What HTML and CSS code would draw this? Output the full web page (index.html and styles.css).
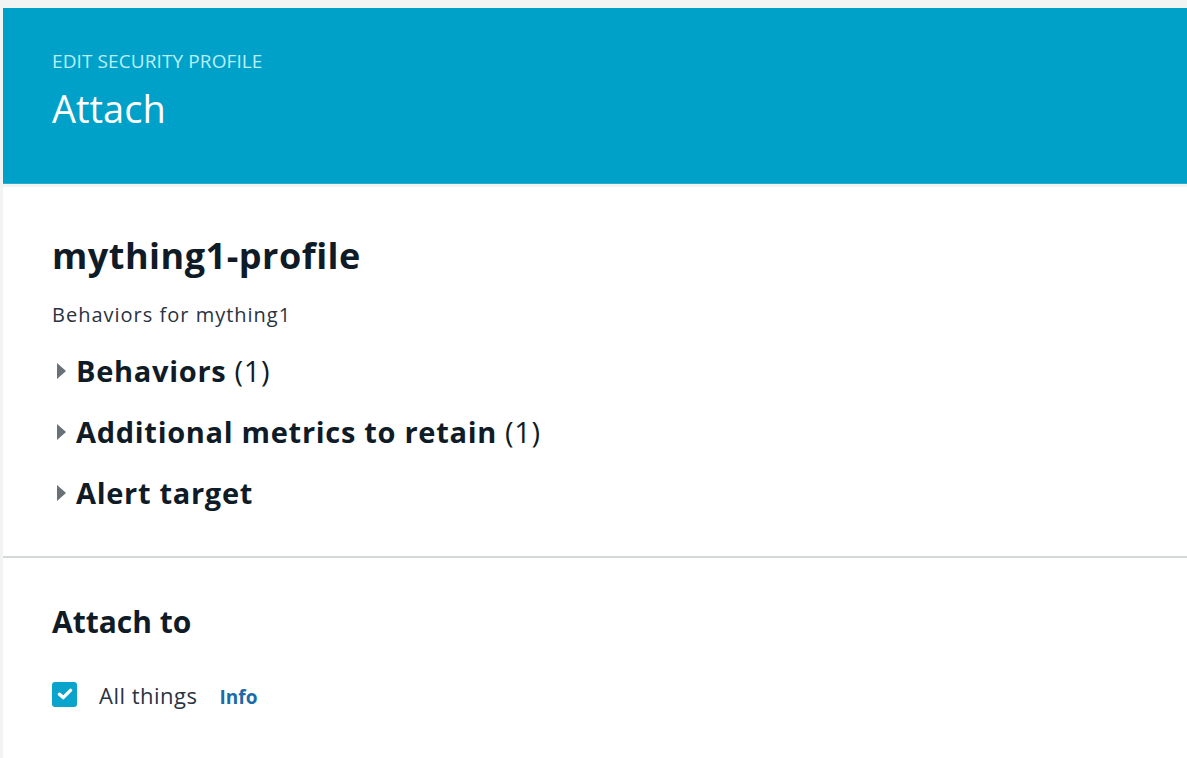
FILE: index.html
```html
<!DOCTYPE html>
<html>
<head>
<meta charset="utf-8">
<link rel="stylesheet" href="styles.css">
</head>
<body>
<div class="page">
  <header class="hero">
    <div class="eyebrow">EDIT SECURITY PROFILE</div>
    <h1 class="hero-title">Attach</h1>
  </header>
  <main class="panel">
    <section class="profile">
      <h2 class="profile-name">mything1-profile</h2>
      <p class="profile-desc">Behaviors for mything1</p>
      <div class="expanders">
        <div class="expander"><span class="caret"></span><span class="exp-title">Behaviors</span><span class="count">(1)</span></div>
        <div class="expander"><span class="caret"></span><span class="exp-title">Additional metrics to retain</span><span class="count">(1)</span></div>
        <div class="expander"><span class="caret"></span><span class="exp-title">Alert target</span></div>
      </div>
    </section>
    <section class="attach">
      <h2 class="attach-title">Attach to</h2>
      <div class="check-row">
        <span class="checkbox">
          <svg width="16" height="12" viewBox="0 0 16 12"><path d="M2.5 6.2 L6.2 9.6 L13.5 2.4" fill="none" stroke="#fff" stroke-width="3.4" stroke-linecap="round" stroke-linejoin="round"/></svg>
        </span>
        <span class="label-group">
          <span class="check-label">All things</span>
          <a class="info">Info</a>
        </span>
      </div>
    </section>
  </main>
</div>
</body>
</html>
```

FILE: styles.css
```css
html, body {
  margin: 0;
  padding: 0;
  background: #f2f3f3;
  font-family: "Open Sans", "Noto Sans", sans-serif;
}
.page {
  padding: 8px 0 0 3px;
  height: 750px;
  display: flex;
  flex-direction: column;
}
.hero {
  background: #00a1c9;
  height: 176px;
  box-sizing: border-box;
  padding: 42px 0 0 49px;
  border-bottom: 1px solid #2aaed0;
}
.eyebrow {
  color: #b9f0ff;
  font-size: 19px;
  letter-spacing: 0.1px;
  line-height: 22px;
}
.hero-title {
  margin: 13px 0 0;
  color: #ffffff;
  font-size: 38px;
  font-weight: 400;
  line-height: 46px;
}
.panel {
  margin-top: 3px;
  background: #ffffff;
  flex: 1;
  display: flex;
  flex-direction: column;
}
.profile {
  padding: 45px 0 33px 49px;
  border-bottom: 2px solid #d5d8d8;
}
.profile-name {
  margin: 0;
  color: #0f1b26;
  font-size: 36px;
  font-weight: 700;
  letter-spacing: 0.5px;
  line-height: 48px;
}
.profile-desc {
  margin: 22px 0 0;
  color: #2a3340;
  font-size: 20px;
  letter-spacing: 1px;
  line-height: 26px;
}
.expanders {
  margin-top: 12px;
}
.expander {
  display: flex;
  align-items: center;
  height: 61px;
  color: #0f1b26;
  font-size: 29px;
  letter-spacing: 0.7px;
  line-height: 38px;
}
.caret {
  width: 0;
  height: 0;
  margin: 0 10px 0 5px;
  border-top: 8px solid transparent;
  border-bottom: 8px solid transparent;
  border-left: 9px solid #687078;
}
.exp-title { font-weight: 700; }
.count { font-weight: 400; margin-left: 8px; }
.attach {
  padding: 44px 0 0 49px;
}
.attach-title {
  margin: 0;
  color: #0f1b26;
  font-size: 30px;
  font-weight: 700;
  line-height: 40px;
}
.check-row {
  display: flex;
  align-items: center;
  margin-top: 37px;
  height: 30px;
}
.checkbox {
  width: 25px;
  height: 25px;
  border-radius: 3px;
  background: #0aa3cb;
  display: flex;
  align-items: center;
  justify-content: center;
}
.label-group {
  display: flex;
  align-items: baseline;
  margin-left: 22px;
  padding-top: 2px;
}
.check-label {
  color: #2a3340;
  font-size: 22px;
  letter-spacing: 0.5px;
  line-height: 30px;
}
.info {
  margin-left: 22px;
  color: #1a6ba8;
  font-size: 19px;
  font-weight: 700;
}
```
